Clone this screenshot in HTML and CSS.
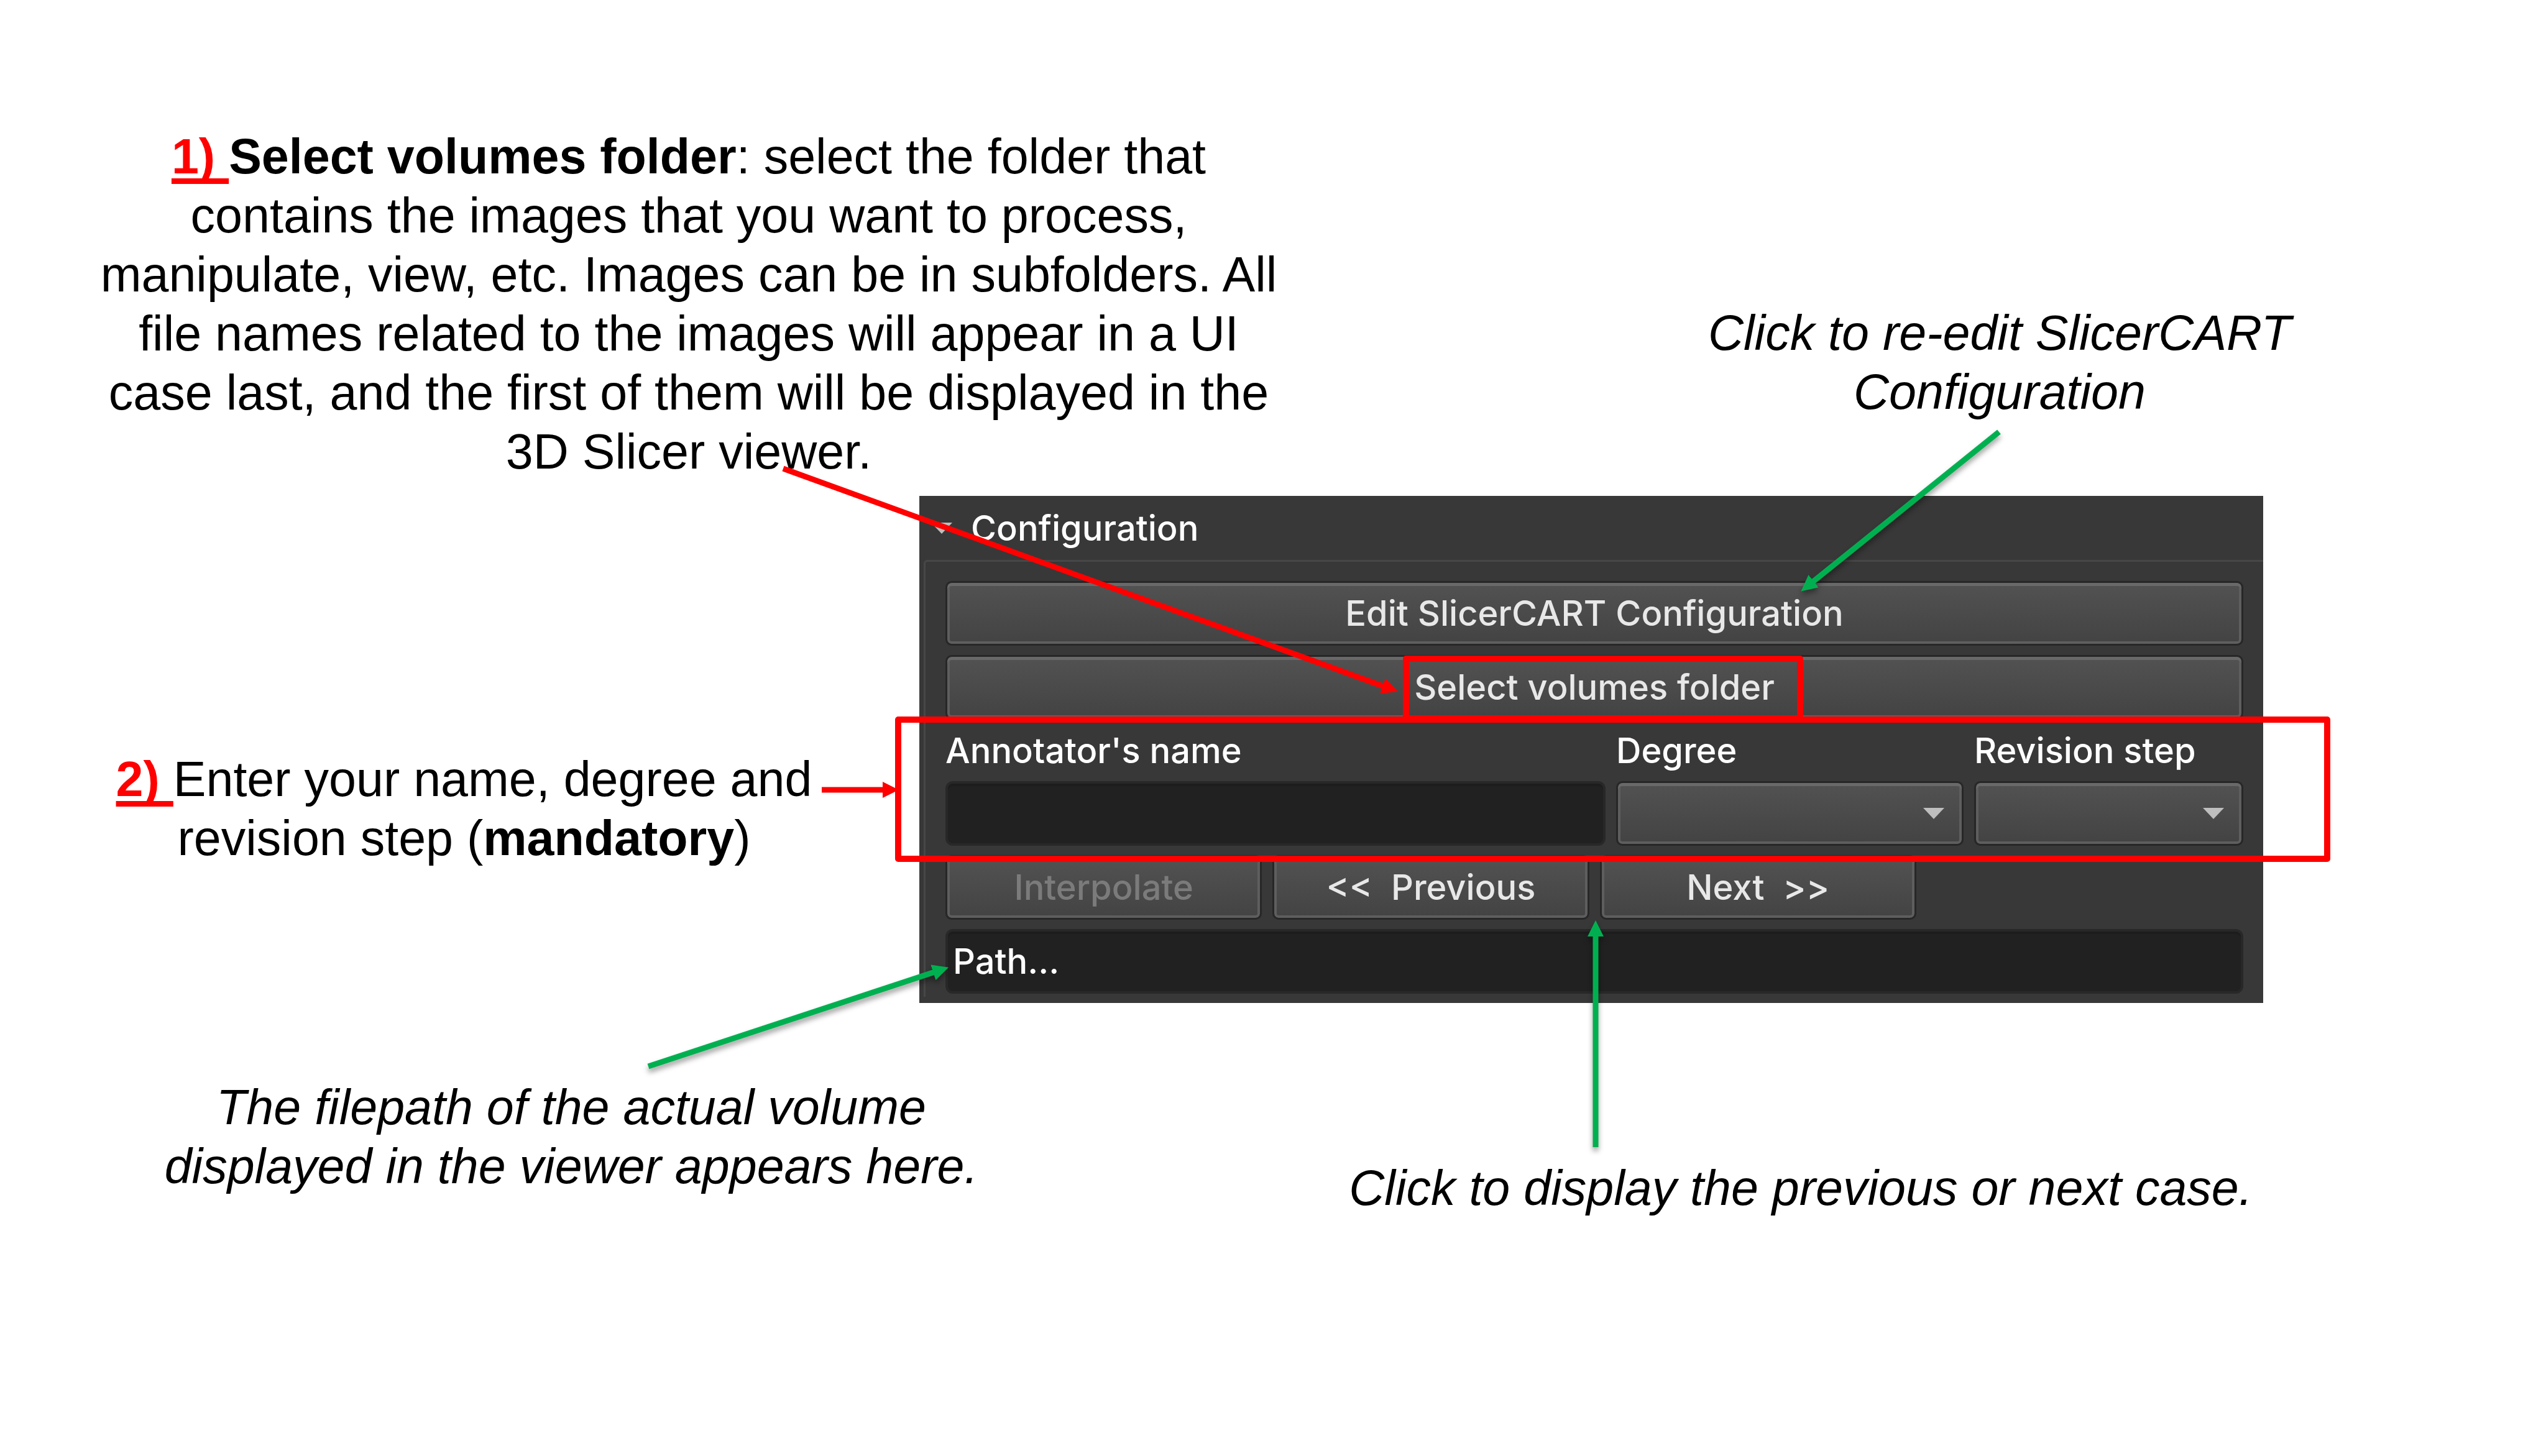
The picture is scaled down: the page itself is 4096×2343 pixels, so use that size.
FILE: index.html
```html
<!DOCTYPE html>
<html lang="en">
<head>
<meta charset="utf-8">
<title>SlicerCART configuration guide</title>
<link rel="stylesheet" href="styles.css">
</head>
<body>
<main class="slide">
  <div class="row row-top">
    <p class="note"><span class="step">1) </span><b>Select volumes folder</b>: select the folder that<br>contains the images that you want to process,<br>manipulate, view, etc. Images can be in subfolders. All<br>file names related to the images will appear in a UI<br>case last, and the first of them will be displayed in the<br>3D Slicer viewer.</p>
    <p class="note note-hint note-edit">Click to re-edit SlicerCART<br>Configuration</p>
  </div>

  <div class="row row-main">
    <p class="note note-fields"><span class="step">2) </span>Enter your name, degree and<br>revision step (<b>mandatory</b>)</p>

    <section class="panel">
      <h2 class="panel-head">
        <button type="button" class="panel-toggle" aria-expanded="true">
          <svg class="caret" viewBox="0 0 34 18" aria-hidden="true"><path d="M0 0H34L17 18Z"/></svg>
          Configuration
        </button>
      </h2>
      <form class="panel-body">
        <button type="button" class="control">Edit SlicerCART Configuration</button>
        <button type="button" class="control">Select volumes folder</button>
        <div class="fields">
          <div class="field">
            <label for="annotator">Annotator's name</label>
            <input id="annotator" class="text-box" type="text">
          </div>
          <div class="field">
            <label for="degree">Degree</label>
            <div class="combo">
              <select id="degree" class="control"><option></option></select>
              <svg class="caret combo-caret" viewBox="0 0 34 18" aria-hidden="true"><path d="M0 0H34L17 18Z"/></svg>
            </div>
          </div>
          <div class="field">
            <label for="revision">Revision step</label>
            <div class="combo">
              <select id="revision" class="control"><option></option></select>
              <svg class="caret combo-caret" viewBox="0 0 34 18" aria-hidden="true"><path d="M0 0H34L17 18Z"/></svg>
            </div>
          </div>
        </div>
        <div class="actions">
          <button type="button" class="control" disabled>Interpolate</button>
          <button type="button" class="control">&lt;&lt;  Previous</button>
          <button type="button" class="control">Next  &gt;&gt;</button>
        </div>
        <input class="text-box" type="text" value="Path..." aria-label="Path" readonly>
      </form>
    </section>
  </div>

  <div class="row row-bottom">
    <p class="note note-hint">The filepath of the actual volume<br>displayed in the viewer appears here.</p>
    <p class="note note-hint note-case">Click to display the previous or next case.</p>
  </div>

  <svg class="marks" viewBox="0 0 4096 2343" aria-hidden="true">
    <defs>
      <marker id="head-red" viewBox="0 0 26 26" markerWidth="26" markerHeight="26" refX="6" refY="13" orient="auto" markerUnits="userSpaceOnUse"><path d="M0 0L26 13L0 26Z" fill="#f00"/></marker>
      <marker id="head-green" viewBox="0 0 26 26" markerWidth="26" markerHeight="26" refX="6" refY="13" orient="auto" markerUnits="userSpaceOnUse"><path d="M0 0L26 13L0 26Z" fill="#00b050"/></marker>
    </defs>
    <g class="red">
      <rect x="2262" y="1060" width="634" height="96"/>
      <rect x="1445" y="1158" width="2299" height="224"/>
    </g>
    <g class="red arrows-red">
      <path d="M1260 754L2230 1106"/>
      <path d="M1322 1271H1426"/>
    </g>
    <g class="arrows-green">
      <path d="M3216 695L2913 939"/>
      <path d="M1043 1716L1507 1563"/>
      <path d="M2567 1846V1501"/>
    </g>
  </svg>
</main>
</body>
</html>
```
FILE: styles.css
```css
* {
  box-sizing: border-box;
}

body {
  margin: 0;
  background: #fff;
}

.slide {
  position: relative;
  min-height: 100vh;
  padding-top: 204px;
  overflow: hidden;
}

.row {
  display: grid;
}

/* callouts */
.note {
  margin: 0;
  color: #000;
  font: 79px/95px "Liberation Sans", Arial, sans-serif;
  text-align: center;
  white-space: nowrap;
}

.note-hint {
  font-style: italic;
}

.step {
  color: #f00;
  font-weight: bold;
  text-decoration: underline;
  text-decoration-thickness: 9px;
  text-underline-offset: 8px;
  text-decoration-skip-ink: none;
}

.row-top {
  grid-template-columns: 2216fr 1758fr;
  column-gap: 122px;
  padding-bottom: 24px;
}

.note-edit {
  padding-top: 284px;
}

.row-main {
  grid-template-columns: 1479fr 2162fr 455fr;
}

.note-fields {
  padding: 408px 0 0 14px;
}

.row-bottom {
  grid-template-columns: 1838fr 2118fr;
  padding: 120px 140px 0 0;
}

.note-case {
  padding-top: 130px;
}

/* application panel */
.panel {
  padding-bottom: 10px;
  background: #383838;
  color: #fff;
  font: 500 56px/70px Inter, Roboto, sans-serif;
}

.panel-head {
  margin: 0;
  font: inherit;
}

.panel-toggle {
  display: flex;
  align-items: center;
  gap: 30px;
  width: 100%;
  height: 103px;
  padding: 0 19px;
  border: 0;
  background: none;
  color: inherit;
  font: inherit;
}

.caret {
  width: 34px;
  height: 18px;
  fill: #bebebe;
}

.panel-body {
  display: flex;
  flex-direction: column;
  gap: 15px;
  margin-left: 7px;
  padding: 31px 32px 5px;
  border: solid #474747;
  border-width: 3px 0 0 3px;
  border-top-left-radius: 6px;
}

.control {
  width: 100%;
  height: 104px;
  padding: 0;
  border: 3px solid #272727;
  border-radius: 10px;
  background: linear-gradient(#525252, #434343);
  box-shadow: inset 0 5px 0 #696969, inset 0 0 0 4px #5e5e5e;
  color: #e8e8e8;
  font: inherit;
  white-space: pre;
  appearance: none;
}

.control:disabled {
  color: #7b7b7b;
}

.text-box {
  width: 100%;
  height: 104px;
  padding: 0 8px;
  border: 4px solid #282828;
  border-radius: 12px;
  background: #212121;
  box-shadow: inset 0 4px 0 #1d1d1d;
  color: #fff;
  font: inherit;
}

.fields {
  display: grid;
  grid-template-columns: 1062fr 559fr 433fr;
  column-gap: 17px;
}

.field {
  display: flex;
  flex-direction: column;
  gap: 14px;
}

.combo {
  display: flex;
  position: relative;
}

.combo-caret {
  position: absolute;
  top: 43px;
  right: 31px;
  pointer-events: none;
}

.actions {
  display: grid;
  grid-template-columns: repeat(4, 1fr);
  column-gap: 17px;
}

/* highlight frames and arrows drawn over the slide */
.marks {
  position: absolute;
  top: 0;
  left: 0;
  width: 100%;
  pointer-events: none;
}

.red {
  fill: none;
  stroke: #f00;
  stroke-width: 10px;
  stroke-linejoin: round;
}

.arrows-red,
.arrows-green {
  stroke-width: 9px;
}

.arrows-red path {
  marker-end: url(#head-red);
}

.arrows-green {
  fill: none;
  stroke: #00b050;
  filter: drop-shadow(0 6px 4px rgba(0, 0, 0, 0.38));
}

.arrows-green path {
  marker-end: url(#head-green);
}
```
